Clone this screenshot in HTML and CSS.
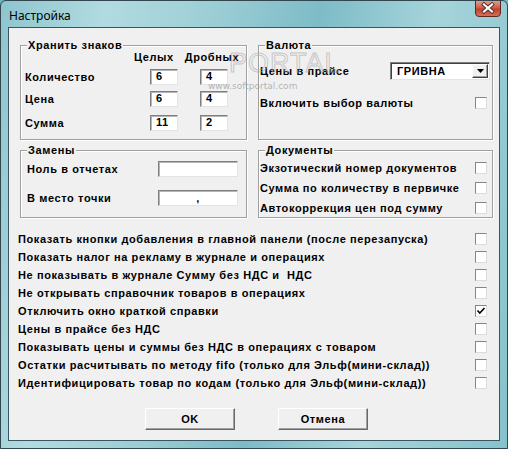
FILE: index.html
```html
<!DOCTYPE html>
<html>
<head>
<meta charset="utf-8">
<link rel="stylesheet" href="styles.css">
</head>
<body>
<div class="window">
  <div class="titlebar">
    <span class="title">Настройка</span>
    <div class="close">
      <svg width="26" height="17" viewBox="0 0 26 17">
        <defs>
          <linearGradient id="cg" x1="0" y1="0" x2="0" y2="1">
            <stop offset="0" stop-color="#e9a594"/>
            <stop offset="0.45" stop-color="#d0604a"/>
            <stop offset="0.55" stop-color="#c2402a"/>
            <stop offset="1" stop-color="#d7735c"/>
          </linearGradient>
        </defs>
        <path d="M0.5 0 V13 Q0.5 16.5 4 16.5 H22 Q25.5 16.5 25.5 13 V0" fill="url(#cg)" stroke="#5b2a22"/>
        <path d="M9 4.5 L17 11.5 M17 4.5 L9 11.5" stroke="#4a3030" stroke-width="4" stroke-linecap="square"/>
        <path d="M9 4.5 L17 11.5 M17 4.5 L9 11.5" stroke="#ffffff" stroke-width="2.2" stroke-linecap="square"/>
      </svg>
    </div>
  </div>
  <div class="client">
    <div class="grouprow first">
      <div class="group g-store">
        <span class="legend">Хранить знаков</span>
        <div class="colheads"><span>Целых</span><span>Дробных</span></div>
        <div class="srow r1"><span class="lbl">Количество</span><span class="edit small">6</span><span class="edit small">4</span></div>
        <div class="srow r2"><span class="lbl">Цена</span><span class="edit small">6</span><span class="edit small">4</span></div>
        <div class="srow r3"><span class="lbl">Сумма</span><span class="edit small">11</span><span class="edit small">2</span></div>
      </div>
      <div class="group g-cur">
        <span class="legend">Валюта</span>
        <div class="crow c1"><span class="lbl">Цены в прайсе</span>
          <div class="combo"><span class="combo-text">ГРИВНА</span><span class="combo-btn"><svg width="7" height="4" viewBox="0 0 7 4"><path d="M0 0H7L3.5 4Z" fill="#000"/></svg></span></div>
        </div>
        <div class="crow c2"><span class="lbl">Включить выбор валюты</span><span class="chk"></span></div>
      </div>
    </div>
    <div class="grouprow second">
      <div class="group g-repl">
        <span class="legend">Замены</span>
        <div class="rrow q1"><span class="lbl">Ноль в отчетах</span><span class="edit wide"></span></div>
        <div class="rrow q2"><span class="lbl">В место точки</span><span class="edit wide center">,</span></div>
      </div>
      <div class="group g-docs">
        <span class="legend">Документы</span>
        <div class="drow d1"><span class="lbl">Экзотический номер документов</span><span class="chk"></span></div>
        <div class="drow"><span class="lbl">Сумма по количеству в первичке</span><span class="chk"></span></div>
        <div class="drow"><span class="lbl">Автокоррекция цен под сумму</span><span class="chk"></span></div>
      </div>
    </div>
    <div class="checklist">
      <div class="lrow"><span class="lbl">Показать кнопки добавления в главной панели (после перезапуска)</span><span class="chk"></span></div>
      <div class="lrow"><span class="lbl">Показать налог на рекламу в журнале и операциях</span><span class="chk"></span></div>
      <div class="lrow"><span class="lbl">Не показывать в журнале Сумму без НДС и&nbsp; НДС</span><span class="chk"></span></div>
      <div class="lrow"><span class="lbl">Не открывать справочник товаров в операциях</span><span class="chk"></span></div>
      <div class="lrow"><span class="lbl">Отключить окно краткой справки</span><span class="chk checked"><svg width="10" height="10" viewBox="0 0 10 10"><path d="M1.5 4.5 L3.8 7 L8.5 2" fill="none" stroke="#000" stroke-width="1.6"/></svg></span></div>
      <div class="lrow"><span class="lbl">Цены в прайсе без НДС</span><span class="chk"></span></div>
      <div class="lrow"><span class="lbl">Показывать цены и суммы без НДС в операциях с товаром</span><span class="chk"></span></div>
      <div class="lrow"><span class="lbl">Остатки расчитывать по методу fifo (только для Эльф(мини-склад))</span><span class="chk"></span></div>
      <div class="lrow"><span class="lbl">Идентифицировать товар по кодам (только для Эльф(мини-склад))</span><span class="chk"></span></div>
    </div>
    <div class="buttons">
      <span class="btn">OK</span>
      <span class="btn">Отмена</span>
    </div>
    <div class="wm-big">PORTAL</div>
    <div class="wm-small">www.softportal.com</div>
  </div>
</div>
</body>
</html>
```
FILE: styles.css
```css
html, body {
  margin: 0;
  padding: 0;
  background: #6fb4c2;
}
.window {
  width: 508px;
  height: 449px;
  box-sizing: border-box;
  border: 1px solid #33464d;
  border-radius: 6px 6px 0 0;
  background: linear-gradient(100deg, #8ec5ce 0%, #b1dbe0 18%, #9fcfd6 35%, #7dbcc7 55%, #a6d4da 75%, #86c2cc 100%);
  overflow: hidden;
  position: relative;
  font-family: "Liberation Sans", Arial, sans-serif;
}
.titlebar {
  height: 26px;
  display: flex;
  align-items: flex-start;
  justify-content: space-between;
}
.title {
  font-family: "Noto Sans", "Open Sans", sans-serif;
  font-size: 12px;
  color: #000;
  margin: 7px 0 0 8px;
  line-height: 16px;
}
.close {
  width: 26px;
  height: 17px;
  margin: -1px 6px 0 0;
}
.close svg { display: block; }
.client {
  position: relative;
  margin-left: 7px;
  width: 492px;
  height: 414px;
  box-sizing: border-box;
  border: 1px solid #3b5560;
  background: #f0f0f0;
  padding: 17px 0 0 11px;
  font-size: 11px;
  font-weight: bold;
  letter-spacing: 0.6px;
  color: #000;
}
.grouprow {
  display: flex;
  gap: 11px;
}
.grouprow.second { margin-top: 10px; }
.group {
  position: relative;
  box-sizing: border-box;
  border: 1px solid #a0a0a0;
  box-shadow: 1px 1px 0 #ffffff, inset 1px 1px 0 #ffffff;
}
.legend {
  position: absolute;
  top: -7px;
  left: 6px;
  padding: 0 1px;
  line-height: 13px;
  background: #f0f0f0;
}
.g-store { width: 227px; height: 95px; padding-left: 4px; }
.g-cur { width: 235px; height: 95px; padding-left: 1px; }
.g-repl { width: 227px; height: 68px; padding-left: 6px; }
.g-docs { width: 235px; height: 68px; padding-left: 1px; }
.lbl { line-height: 13px; white-space: nowrap; }

.colheads {
  display: flex;
  gap: 11px;
  margin: 5px 0 0 109px;
  line-height: 13px;
}
.srow {
  display: flex;
  align-items: center;
  height: 16px;
}
.srow.r1 { margin-top: 5px; }
.srow.r2 { margin-top: 6px; }
.srow.r3 { margin-top: 8px; }
.srow .lbl { width: 125px; }
.srow .edit + .edit { margin-left: 22px; }

.edit {
  display: block;
  box-sizing: border-box;
  height: 16px;
  background: #fff;
  border: 1px solid;
  border-color: #7f7f7f #e3e3e3 #e3e3e3 #7f7f7f;
  box-shadow: inset 1px 1px 0 #b5b5b5;
  line-height: 12px;
  padding: 0 0 0 5px;
}
.edit.small { width: 28px; }
.edit.wide { width: 80px; }
.edit.center { text-align: center; padding: 0; line-height: 14px; }

.crow {
  display: flex;
  align-items: center;
  justify-content: space-between;
}
.crow.c1 { margin-top: 16px; height: 18px; padding-right: 2px; }
.crow.c2 { margin-top: 17px; height: 12px; padding-right: 5px; }
.combo {
  width: 100px;
  height: 18px;
  box-sizing: border-box;
  background: #fff;
  border: 1px solid;
  border-color: #7f7f7f #e3e3e3 #e3e3e3 #7f7f7f;
  box-shadow: inset 1px 1px 0 #404040;
  display: flex;
  align-items: center;
  justify-content: space-between;
  padding: 1px 1px 1px 6px;
}
.combo-text { line-height: 13px; }
.combo-btn {
  width: 16px;
  height: 14px;
  box-sizing: border-box;
  background: #f0f0f0;
  border: 1px solid;
  border-color: #ffffff #404040 #404040 #ffffff;
  box-shadow: inset -1px -1px 0 #a0a0a0;
  display: flex;
  align-items: center;
  justify-content: center;
}
.combo-btn svg { display: block; }

.chk {
  display: block;
  width: 12px;
  height: 12px;
  box-sizing: border-box;
  background: #fff;
  border: 1px solid;
  border-color: #858585 #dcdcdc #dcdcdc #858585;
  flex: none;
}
.chk.checked { display: flex; align-items: center; justify-content: center; }
.chk.checked svg { display: block; }

.rrow {
  display: flex;
  align-items: center;
  justify-content: space-between;
  height: 16px;
  padding-right: 8px;
}
.rrow.q1 { margin-top: 10px; }
.rrow.q2 { margin-top: 13px; }

.drow {
  display: flex;
  align-items: center;
  justify-content: space-between;
  height: 12px;
  margin-top: 8px;
  padding-right: 5px;
}
.drow.d1 { margin-top: 11px; }

.checklist {
  margin: 12px 0 0 -2px;
  width: 469px;
}
.lrow {
  display: flex;
  align-items: center;
  justify-content: space-between;
  height: 18px;
}

.buttons {
  display: flex;
  gap: 43px;
  margin: 16px 0 0 125px;
}
.btn {
  display: flex;
  align-items: center;
  justify-content: center;
  width: 90px;
  height: 22px;
  box-sizing: border-box;
  background: #f0f0f0;
  border: 1px solid;
  border-color: #ffffff #696969 #696969 #ffffff;
  box-shadow: inset -1px -1px 0 #a0a0a0;
}

.wm-big {
  position: absolute;
  left: 220px;
  top: 20px;
  font-family: "Liberation Sans", Arial, sans-serif;
  font-weight: normal;
  font-size: 27px;
  letter-spacing: 1px;
  color: transparent;
  -webkit-text-stroke: 1px rgba(170,170,170,0.6);
  pointer-events: none;
}
.wm-small {
  position: absolute;
  left: 199px;
  top: 53px;
  font-family: "DejaVu Sans", sans-serif;
  font-weight: normal;
  font-size: 9px;
  letter-spacing: 0;
  color: rgba(150,150,150,0.7);
  pointer-events: none;
}
```
